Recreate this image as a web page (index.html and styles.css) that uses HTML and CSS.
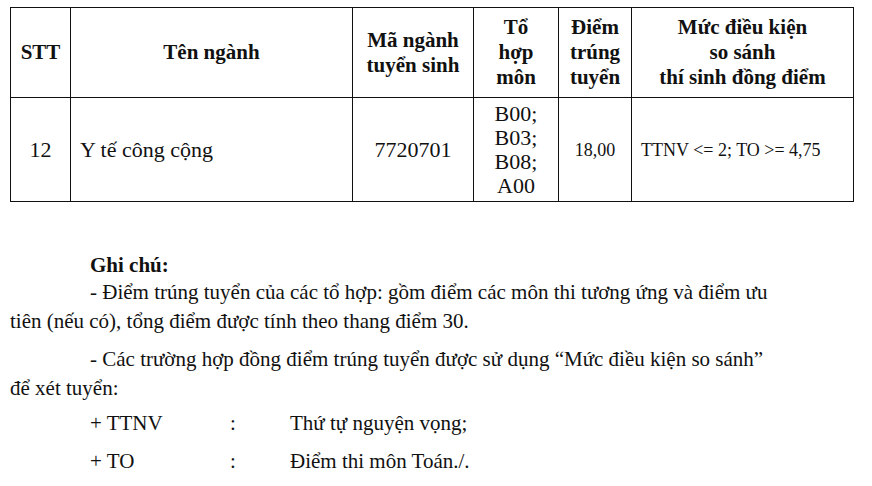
FILE: index.html
```html
<!DOCTYPE html>
<html>
<head>
<meta charset="utf-8">
<link rel="stylesheet" href="styles.css">
</head>
<body>
<div class="page">
  <table class="scores">
    <thead>
      <tr>
        <th class="c-stt">STT</th>
        <th class="c-name">Tên ngành</th>
        <th class="c-code">Mã ngành<br>tuyển sinh</th>
        <th class="c-combo">Tổ<br>hợp<br>môn</th>
        <th class="c-score">Điểm<br>trúng<br>tuyển</th>
        <th class="c-cond">Mức điều kiện<br>so sánh<br>thí sinh đồng điểm</th>
      </tr>
    </thead>
    <tbody>
      <tr>
        <td class="c-stt">12</td>
        <td class="c-name left">Y tế công cộng</td>
        <td class="c-code">7720701</td>
        <td class="c-combo">B00;<br>B03;<br>B08;<br>A00</td>
        <td class="c-score small">18,00</td>
        <td class="c-cond small left">TTNV &lt;= 2; TO &gt;= 4,75</td>
      </tr>
    </tbody>
  </table>

  <div class="notes">
    <p class="note-title">Ghi chú:</p>
    <p class="note">- Điểm trúng tuyển của các tổ hợp: gồm điểm các môn thi tương ứng và điểm ưu<br>tiên (nếu có), tổng điểm được tính theo thang điểm 30.</p>
    <p class="note">- Các trường hợp đồng điểm trúng tuyển được sử dụng “Mức điều kiện so sánh”<br>để xét tuyển:</p>
    <div class="legend">
      <span>+ TTNV</span><span>:</span><span>Thứ tự nguyện vọng;</span>
      <span>+ TO</span><span>:</span><span>Điểm thi môn Toán./.</span>
    </div>
  </div>
</div>
</body>
</html>
```
FILE: styles.css
```css
body {
  margin: 0;
  background: #fff;
  font-size: 21px;
  font-family: "Liberation Serif", Tinos, "Noto Serif", FreeSerif, serif;
}
th, td, p, span, div {
  font-family: "Liberation Serif", Tinos, "Noto Serif", FreeSerif, serif;
}
.page {
  padding: 7px 0 0 10px;
  color: #111;
}
.scores {
  border-collapse: collapse;
  width: 844px;
  table-layout: fixed;
}
.scores th, .scores td {
  border: 1px solid #111;
  padding: 0;
  text-align: center;
  vertical-align: middle;
  color: #111;
}
.scores th {
  font-weight: bold;
  font-size: 21px;
  line-height: 25px;
  height: 89px;
}
.scores td {
  font-size: 22px;
  line-height: 24px;
  height: 103px;
}
.scores td.small {
  font-size: 18px;
}
.scores td.left {
  text-align: left;
  padding-left: 9px;
}
.c-stt { width: 59px; }
.c-name { width: 281px; }
.c-code { width: 120px; }
.c-combo { width: 84px; }
.c-score { width: 72px; }
.c-cond { width: 221px; }

.notes {
  margin-top: 50px;
  font-size: 21px;
  line-height: 29px;
}
.notes p {
  margin: 0;
}
.notes .note-title {
  font-weight: bold;
  padding-left: 80px;
  line-height: 26px;
}
.notes .note {
  text-indent: 80px;
  margin-bottom: 9px;
}
.legend {
  display: grid;
  grid-template-columns: 140px 60px auto;
  row-gap: 9px;
  padding-left: 80px;
  margin-top: -3px;
}
```
